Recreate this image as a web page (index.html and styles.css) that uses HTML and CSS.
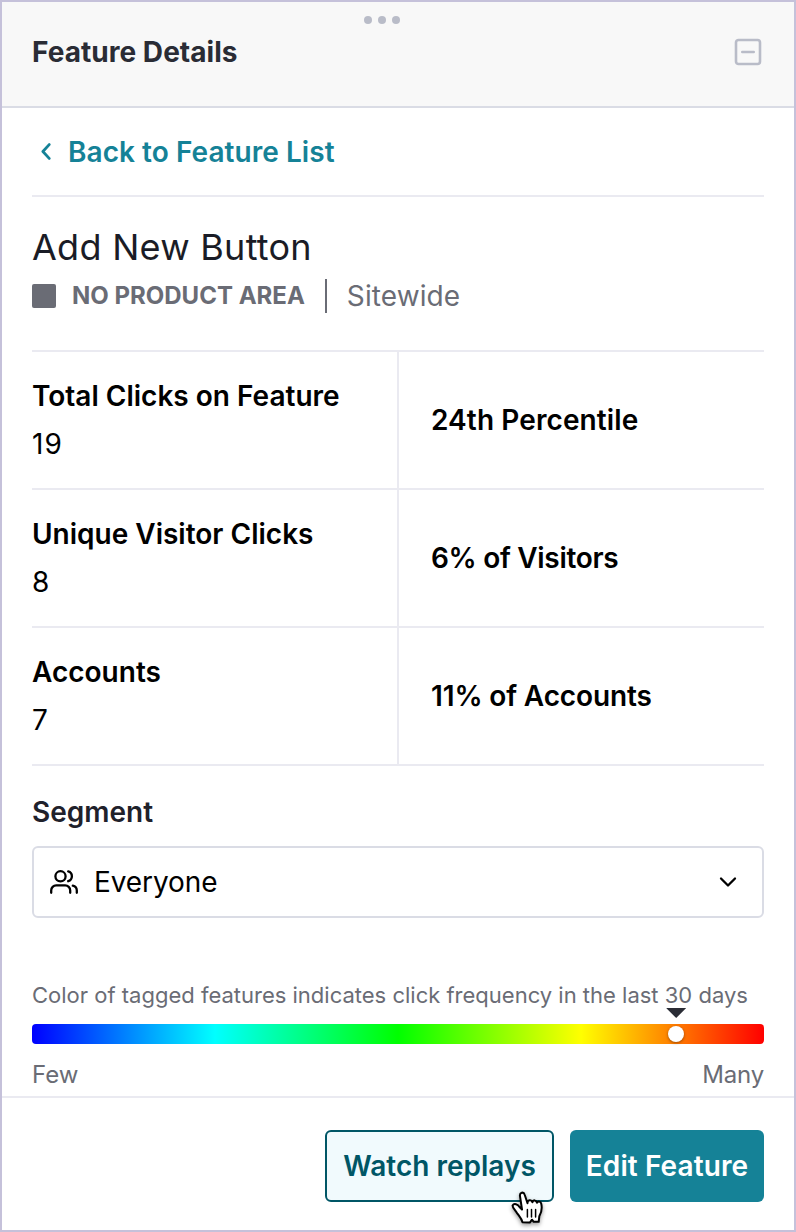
FILE: index.html
```
<!DOCTYPE html>
<html lang="en">
<head>
	<meta charset="utf-8">
	<title>Feature Details</title>
	<link rel="stylesheet" href="styles.css">
</head>
<body>
	<div class="panel">
		<div class="header">
			<div class="drag-handle"><span></span><span></span><span></span></div>
			<div class="header-row">
				<h1>Feature Details</h1>
				<svg class="collapse" width="28" height="28" viewBox="0 0 28 28" fill="none" stroke="#b9bcc8" stroke-width="2.6" stroke-linecap="round">
					<rect x="2" y="2" width="24" height="24" rx="2.5"/>
					<path d="M8.3 14h11.4"/>
				</svg>
			</div>
		</div>

		<div class="content">
			<a class="back" href="#">
				<svg width="10" height="17" viewBox="0 0 10 17" fill="none" stroke="#158297" stroke-width="2.8" stroke-linecap="round" stroke-linejoin="round">
					<path d="M8.2 1.6L1.9 8.5l6.3 6.9"/>
				</svg>
				<span class="back-text">Back to Feature List</span>
			</a>

			<div class="feature">
				<h2>Add New Button</h2>
				<div class="feature-info">
					<span class="swatch"></span>
					<span class="area">NO PRODUCT AREA</span>
					<span class="separator"></span>
					<span class="scope">Sitewide</span>
				</div>
			</div>

			<div class="stats">
				<div class="stat">
					<span class="label">Total Clicks on Feature</span>
					<span class="value wide">19</span>
				</div>
				<div class="stat right"><span class="label percentile">24th Percentile</span></div>
				<div class="stat">
					<span class="label">Unique Visitor Clicks</span>
					<span class="value">8</span>
				</div>
				<div class="stat right"><span class="label visitors">6% of Visitors</span></div>
				<div class="stat">
					<span class="label">Accounts</span>
					<span class="value">7</span>
				</div>
				<div class="stat right"><span class="label accounts-share">11% of Accounts</span></div>
			</div>

			<h3>Segment</h3>
			<div class="select">
				<svg width="28" height="24" viewBox="0 0 28 24" fill="none" stroke="#000" stroke-width="2.3" stroke-linecap="round" stroke-linejoin="round">
					<circle cx="10.5" cy="6.3" r="5.1"/>
					<path d="M1.2 22.8v-2.4a5 5 0 0 1 5-5h9a5 5 0 0 1 5 5v2.4"/>
					<path d="M18.2 1.4a5.1 5.1 0 0 1 0 9.8"/>
					<path d="M22.8 15.7a5 5 0 0 1 4 4.8v2.3"/>
				</svg>
				<span class="select-text">Everyone</span>
				<svg class="chevron" width="18" height="12" viewBox="0 0 18 12" fill="none" stroke="#000" stroke-width="2.3" stroke-linecap="round" stroke-linejoin="round">
					<path d="M2 2.5l7 7 7-7"/>
				</svg>
			</div>

			<p class="hint">Color of tagged features indicates click frequency in the last 30 days</p>
			<div class="heat-bar">
				<div class="marker" style="left: 88%">
					<span class="arrow"></span>
					<span class="dot"></span>
				</div>
			</div>
			<div class="scale">
				<span>Few</span>
				<span class="many">Many</span>
			</div>
		</div>

		<div class="footer">
			<button class="button watch"><span>Watch replays</span>
				<svg class="cursor" width="36" height="38" viewBox="0 0 36 38" stroke="#000" stroke-width="2" stroke-linejoin="round" stroke-linecap="round">
					<path fill="#fff" d="M11 19.5 L9 6.2 C8.4 2.4 12.6 1.2 13.7 4.8 L16.5 13.2 C16.3 9.8 20.5 9.3 21.4 12.2 C22 9.5 25.4 9.9 26 12.8 C27 10.7 30 11.4 30.3 14 C31.2 18.2 30.6 22.3 28.3 26.3 L27.7 31.8 L22.7 31.8 L21 29.7 L18.8 32.6 L11.5 32.3 C10.6 28.5 7.8 25.7 5.7 22.6 C4.2 20.1 1.3 17.5 1.6 15.5 C3 12.8 6.9 14.2 8.5 17 L11 19.5"/>
					<path fill="none" stroke-width="1.5" d="M16.4 19.5v7.5M20.5 19.5v7.5M24.6 19.5v7.5"/>
				</svg>
			</button>
			<button class="button edit"><span>Edit Feature</span></button>
		</div>
	</div>
</body>
</html>
```
FILE: styles.css
```
* {
	box-sizing: border-box;
}

body {
	margin: 0;
	font-family: Inter, "Liberation Sans", sans-serif;
	font-size: 28px;
	color: #000;
	background-color: #fff;
}

h1, h2, h3, p {
	margin: 0;
}

svg {
	display: block;
	flex: none;
}

.panel {
	display: flex;
	flex-direction: column;
	height: 1232px;
	border: 2px solid #c5c1da;
	white-space: nowrap;
}

.header {
	height: 106px;
	padding: 14px 30px 0;
	background-color: #f8f8f8;
	border-bottom: 2px solid #dadce5;
}

.drag-handle {
	display: flex;
	justify-content: center;
	gap: 6px;
	padding-right: 32px;
}

.drag-handle span {
	width: 8px;
	height: 8px;
	border-radius: 50%;
	background-color: #b9bcc8;
}

.header-row {
	display: flex;
	align-items: center;
	justify-content: space-between;
	height: 40px;
	margin-top: 8px;
	padding-right: 2px;
}

h1 {
	font-size: 28px;
	font-weight: 700;
	letter-spacing: 0.04px;
	color: #2a2c35;
}

.content {
	height: 988px;
	padding: 0 30px;
}

.back {
	display: flex;
	align-items: center;
	gap: 17px;
	height: 89px;
	padding-left: 9px;
	border-bottom: 2px solid #eaeaf1;
	color: #158297;
	font-weight: 600;
	letter-spacing: 0.05px;
	text-decoration: none;
}

.feature {
	height: 153px;
	padding-top: 26px;
}

h2 {
	font-size: 36px;
	line-height: 48px;
	font-weight: 400;
	letter-spacing: 0.27px;
	color: #1a1c26;
}

.feature-info {
	display: flex;
	align-items: center;
	height: 50px;
	color: #6a6c75;
}

.swatch {
	width: 24px;
	height: 24px;
	margin-right: 16px;
	border-radius: 2px;
	background-color: #6a6c75;
}

.area {
	padding-bottom: 2px;
	font-size: 24px;
	font-weight: 700;
}

.separator {
	width: 2px;
	height: 34px;
	margin: 0 20px;
	background-color: #6a6c75;
}

.scope {
	letter-spacing: 0.1px;
}

.stats {
	display: grid;
	grid-template-columns: 367px 365px;
	grid-auto-rows: 138px;
	height: 416px;
	border-top: 2px solid #eaeaf1;
}

.stat {
	display: flex;
	flex-direction: column;
	justify-content: center;
	line-height: 48px;
	border-right: 2px solid #eaeaf1;
	border-bottom: 2px solid #eaeaf1;
}

.stat.right {
	padding-left: 32px;
	border-right: none;
}

.label {
	font-weight: 600;
}

.percentile {
	letter-spacing: 0.1px;
}

.visitors {
	letter-spacing: -0.3px;
}

.accounts-share {
	letter-spacing: -0.14px;
}

.wide {
	letter-spacing: 1px;
}

h3 {
	padding-top: 22px;
	font-size: 28px;
	line-height: 48px;
	font-weight: 600;
	color: #1f212b;
}

.select {
	display: flex;
	align-items: center;
	height: 72px;
	margin-top: 10px;
	padding: 0 25px 0 16px;
	border: 2px solid #dadce5;
	border-radius: 6px;
}

.select-text {
	flex: 1;
	margin-left: 16px;
	letter-spacing: -0.1px;
}

.hint {
	margin-top: 61px;
	font-size: 22px;
	line-height: 32px;
	color: #6a6c75;
}

.heat-bar {
	position: relative;
	height: 20px;
	margin-top: 13px;
	border-radius: 4px;
	background: linear-gradient(to right, #00f 0%, #0ff 25%, #0f0 50%, #ff0 75%, #f00 100%);
}

.marker {
	position: absolute;
	top: -16px;
	width: 20px;
	margin-left: -10px;
}

.arrow {
	display: block;
	height: 10px;
	background-color: #2a2c35;
	clip-path: polygon(0 0, 100% 0, 50% 100%);
}

.dot {
	display: block;
	width: 16px;
	height: 16px;
	margin: 8px 2px 0;
	border-radius: 50%;
	background-color: #fff;
	box-shadow: 0 1px 3px rgba(0, 0, 0, 0.4);
}

.scale {
	display: flex;
	justify-content: space-between;
	margin-top: 14px;
	font-size: 24px;
	line-height: 34px;
	color: #6a6c75;
}

.many {
	letter-spacing: -0.2px;
}

.footer {
	display: flex;
	flex: 1;
	align-items: flex-start;
	justify-content: flex-end;
	gap: 16px;
	padding: 32px 30px 0;
	border-top: 2px solid #eaeaf1;
}

.button {
	position: relative;
	height: 72px;
	padding: 0;
	border: none;
	border-radius: 6px;
	font-family: inherit;
	font-size: 28px;
	font-weight: 600;
}

.watch {
	width: 229px;
	color: #005666;
	background-color: #f1fafd;
	border: 2px solid #005666;
}

.edit {
	width: 194px;
	color: #fff;
	background-color: #158297;
	letter-spacing: 0.1px;
}

.cursor {
	position: absolute;
	top: 58px;
	left: 184px;
	filter: drop-shadow(0 2px 2px rgba(0, 0, 0, 0.4));
}
```
